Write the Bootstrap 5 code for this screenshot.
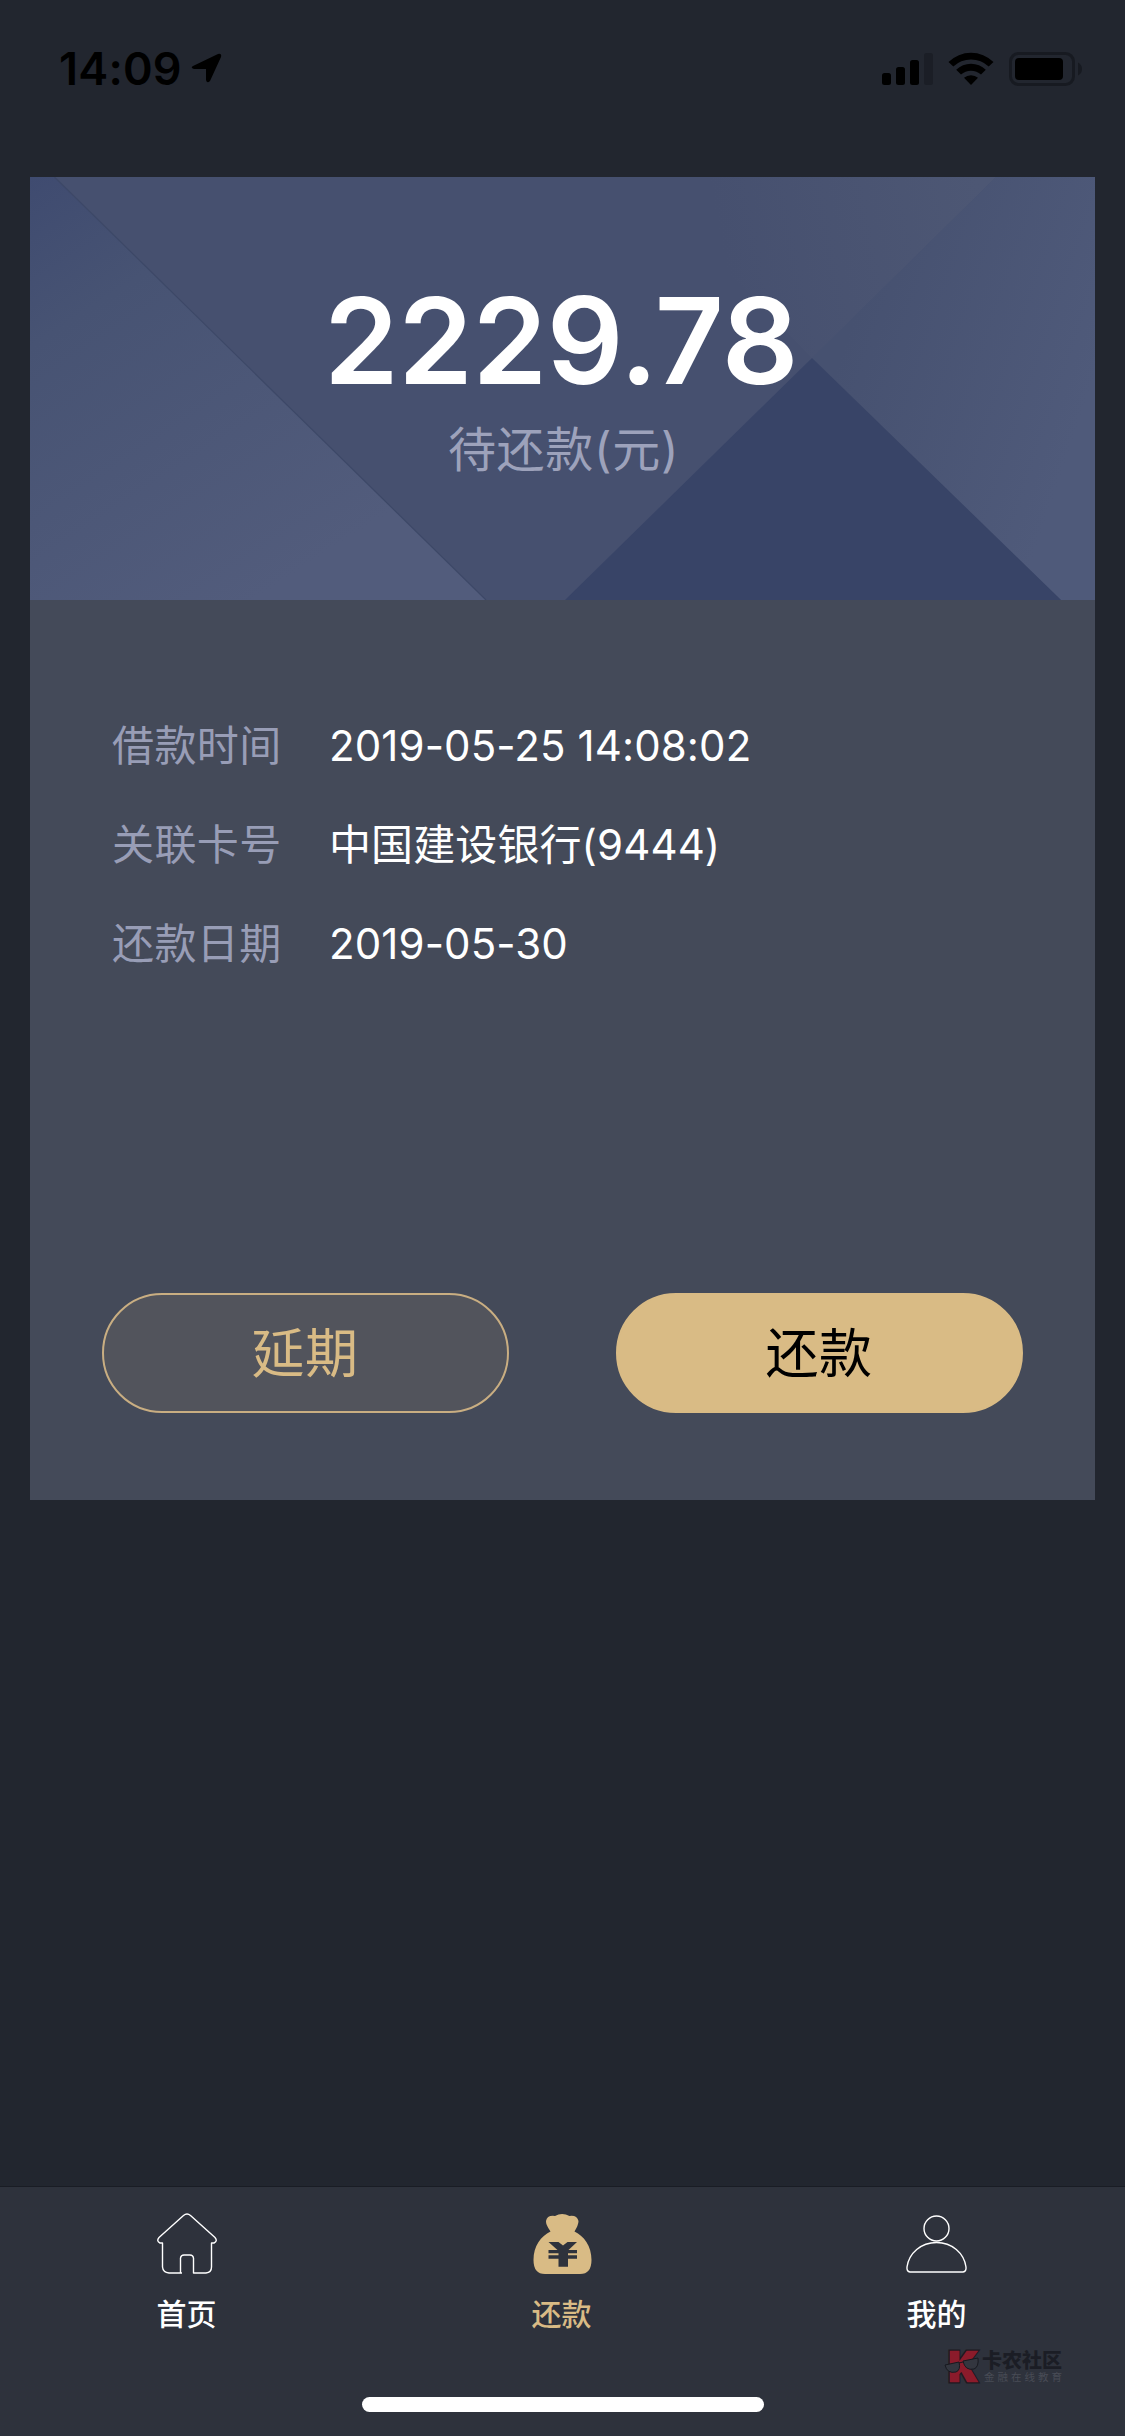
<!DOCTYPE html>
<html lang="zh-CN">
<head>
    <meta charset="UTF-8">
    <meta name="viewport" content="width=device-width, initial-scale=1.0">
    <title>还款</title>
    <link href="https://cdn.jsdelivr.net/npm/bootstrap@5.3.0/dist/css/bootstrap.min.css" rel="stylesheet">
    <style>
        body { background: #22262f; color: #fff; height: 2436px; font-family: Inter, "Noto Sans CJK SC", sans-serif; overflow: hidden; }
        svg { display: block; flex: none; }

        .status-bar { height: 177px; padding: 46px 43px 0 59px; color: #000; }
        .clock { font-size: 45px; font-weight: 600; line-height: 46px; width: 132px; white-space: nowrap; letter-spacing: .2px; }
        .location-arrow { margin-top: 7px; }
        .status-icons { padding-top: 6px; }

        .loan-card { margin: 0 30px; height: 1323px; background: #444a59; }
        .hero { height: 423px; background: #46506f; }
        .amount { font-size: 120px; font-weight: 600; line-height: 120px; margin: 104px 3px 0 0; letter-spacing: -0.5px; }
        .amount-label { font-size: 48px; line-height: 60px; margin-top: 19px; padding-left: 2px; color: #9da2bb; letter-spacing: .7px; }

        .details { padding: 96px 80px 0 82px; font-size: 42px; line-height: 99px; }
        .detail-name { width: 217px; color: #989db6; letter-spacing: .4px; }
        .detail-value { letter-spacing: .1px; }

        .actions { padding: 0 72px 87px; }
        .btn-pill { width: 407px; height: 120px; border-radius: 60px; font-size: 53px; line-height: 1; padding: 2px 1px 0 0; border: 2px solid #d0b484; letter-spacing: .5px; }
        .btn-extend, .btn-extend:hover { background: #52545c; color: #d9bb85; border-color: #c9ae82; }
        .btn-repay, .btn-repay:hover { background: #d9bb85; color: #000; border-color: #d9bb85; }

        .tab-bar { height: 250px; background: #2e323c; border-top: 1px solid #191c24; }
        .tab-item { color: #fff; text-decoration: none; font-size: 30px; font-weight: 500; line-height: 40px; padding: 24px 2px 0 0; }
        .tab-item svg { margin-bottom: 17px; }
        .tab-item.active { color: #d9bb85; }
        .home-indicator { width: 402px; height: 15px; border-radius: 8px; background: #fff; margin-bottom: 24px; }

        .watermark { left: 944px; top: 2346px; }
        .mark-letter { font-family: Inter, sans-serif; font-size: 40px; font-weight: 900; }
        .mark-title { font-size: 20px; font-weight: 900; line-height: 22px; color: #1b1d25; }
        .mark-sub { font-size: 10.5px; line-height: 12px; letter-spacing: 3px; color: #494c56; padding-left: 2px; }
    </style>
</head>
<body class="d-flex flex-column position-relative">
    <header class="status-bar d-flex align-items-start">
        <div class="clock">14:09</div>
        <svg class="location-arrow" width="31" height="31" viewBox="0 0 31 31">
            <path d="M2 13 L27 1 Q31 0 30 4 L19 28 Q16 31 15 27 V16 H3 Q-1 15 2 13Z"/>
        </svg>
        <div class="status-icons d-flex ms-auto">
            <svg width="200" height="36" viewBox="882 52 200 36">
                <!-- signal -->
                <rect x="882" y="73" width="9" height="12" rx="2.5"/>
                <rect x="896" y="67" width="9" height="18" rx="2.5"/>
                <rect x="910" y="60" width="9" height="25" rx="2.5"/>
                <rect x="924" y="53" width="9" height="32" rx="2.5" fill="#1b1e26"/>
                <!-- wifi -->
                <path d="M948.5 62 A32 32 0 0 1 993.500 62 L988.700 66.600 A25.500 25.500 0 0 0 953.300 66.600Z"/>
                <path d="M956.200 69.800 A21.300 21.300 0 0 1 985.800 69.800 L981 74.600 A14.600 14.600 0 0 0 961 74.600Z"/>
                <path d="M964 77.800 A10.500 10.500 0 0 1 978 77.800 L971 85Z"/>
                <!-- battery -->
                <rect x="1010.500" y="53.500" width="63" height="31" rx="8" fill="none" stroke="#171a21" stroke-width="3"/>
                <rect x="1015" y="58" width="48" height="22" rx="4"/>
                <path d="M1078 62.500 Q1082 64.500 1082 69 Q1082 73.500 1078 75.500Z" fill="#171a21"/>
            </svg>
        </div>
    </header>

    <main class="loan-card d-flex flex-column">
        <section class="hero position-relative text-center overflow-hidden">
            <svg class="position-absolute top-0 start-0" width="1065" height="423" viewBox="0 0 1065 423">
                <defs>
                    <linearGradient id="leftShade" gradientUnits="userSpaceOnUse" x1="0" y1="0" x2="260" y2="400">
                        <stop offset="0" stop-color="#3f4b70"/>
                        <stop offset=".3" stop-color="#475373"/>
                        <stop offset="1" stop-color="#525c7c"/>
                    </linearGradient>
                    <linearGradient id="topShade" gradientUnits="userSpaceOnUse" x1="690" y1="60" x2="950" y2="10">
                        <stop offset="0" stop-color="#46506f"/>
                        <stop offset="1" stop-color="#4d5774"/>
                    </linearGradient>
                    <linearGradient id="rightShade" gradientUnits="userSpaceOnUse" x1="830" y1="120" x2="1065" y2="200">
                        <stop offset="0" stop-color="#465170"/>
                        <stop offset="1" stop-color="#4f5a7a"/>
                    </linearGradient>
                </defs>
                <path d="M604 0 H966 L782 181Z" fill="url(#topShade)"/>
                <path d="M966 0 H1065 V423 H1031 L782 181Z" fill="url(#rightShade)"/>
                <path d="M0 0 H24.500 L456 423 H0Z" fill="url(#leftShade)"/>
                <path d="M24.500 0 L456 423" stroke="#3d4867" stroke-width="1.200"/>
                <path d="M535 423 L782 181 L1031 423Z" fill="#384467"/>
            </svg>
            <div class="position-relative">
                <div class="amount">2229.78</div>
                <div class="amount-label">待还款(元)</div>
            </div>
        </section>

        <section class="details">
            <div class="d-flex"><span class="detail-name">借款时间</span><span class="detail-value">2019-05-25 14:08:02</span></div>
            <div class="d-flex"><span class="detail-name">关联卡号</span><span class="detail-value">中国建设银行(9444)</span></div>
            <div class="d-flex"><span class="detail-name">还款日期</span><span class="detail-value">2019-05-30</span></div>
        </section>

        <div class="actions d-flex justify-content-between mt-auto">
            <button type="button" class="btn btn-pill btn-extend">延期</button>
            <button type="button" class="btn btn-pill btn-repay">还款</button>
        </div>
    </main>

    <nav class="tab-bar mt-auto d-flex flex-column align-items-center">
        <div class="row g-0 w-100 text-center">
            <a class="tab-item col d-flex flex-column align-items-center" href="#">
                <svg width="64" height="66" viewBox="0 0 64 66" fill="none" stroke="#fff" stroke-width="1.400" stroke-linejoin="round">
                    <path d="M27 62 H14 Q8 61.500 7.500 56 V32 H5 Q1 30 4 26.500 L28.500 4.500 Q32 1.500 35.500 4.500 L60 26.500 Q63 30 59 32 H56.500 V56 Q56.500 61.500 51 62 H38.500 V47 Q38 44 35 44 H29 Q26 44 25.500 47 V62"/>
                </svg>
                <span>首页</span>
            </a>
            <a class="tab-item active col d-flex flex-column align-items-center" href="#">
                <svg width="64" height="66" viewBox="0 0 64 66">
                    <path d="M20.500 20.500 C17 15 16 13 16 10 Q17 4 25 5 Q32 1 39.500 5 Q47 4 48.500 10 Q48.500 14 44.500 20.500 C54 25 61.500 35 61.500 49 Q61.500 63 50 63 H15 Q3.500 63 3.500 49 C3.500 35 11 25 20.500 20.500Z" fill="#d9bb85"/>
                    <path d="M18.500 31 H28.500 L33 34.500 L37.500 31 H47 L38.500 39 H47 V42.300 H38 V44.300 H47 V47.700 H38 V55.700 H28.500 V47.700 H18.500 V44.300 H28.500 V42.300 H18.500 V39 H27.500Z" fill="#2e323c"/>
                </svg>
                <span>还款</span>
            </a>
            <a class="tab-item col d-flex flex-column align-items-center" href="#">
                <svg width="64" height="66" viewBox="0 0 64 66" fill="none" stroke="#fff" stroke-width="1.400">
                    <circle cx="31.500" cy="17.500" r="12.500"/>
                    <path d="M5 61 Q1.500 60.500 2 56 C4 42 16 31.500 31.500 31.500 S59 42 61 56 Q61.500 60.500 58 61Z"/>
                </svg>
                <span>我的</span>
            </a>
        </div>
        <div class="home-indicator mt-auto"></div>
    </nav>

    <div class="watermark position-absolute d-flex">
        <svg class="overflow-visible" width="38" height="40" viewBox="0 0 38 40">
            <g class="mark-letter">
                <text x="5" y="35" textLength="28" lengthAdjust="spacingAndGlyphs" fill="#1d1820" stroke="#1d1820" stroke-width="5">K</text>
                <text x="5" y="35" textLength="28" lengthAdjust="spacingAndGlyphs" fill="#8b1b2b" stroke="#8b1b2b" stroke-width="2.500">K</text>
            </g>
            <g fill="#33363f" stroke="#17191f" stroke-width="1">
                <path d="M1 19 L15 16 Q17 24 12 26 Q3 28 1 19Z"/>
                <path d="M19 15 L34 12 Q35 21 30 23 Q21 25 19 15Z"/>
                <path d="M15 17 L19 16"/>
            </g>
        </svg>
        <div class="d-flex flex-column pt-1">
            <span class="mark-title">卡农社区</span>
            <span class="mark-sub">金融在线教育</span>
        </div>
    </div>

    <script src="https://cdn.jsdelivr.net/npm/bootstrap@5.3.0/dist/js/bootstrap.bundle.min.js"></script>
</body>
</html>
